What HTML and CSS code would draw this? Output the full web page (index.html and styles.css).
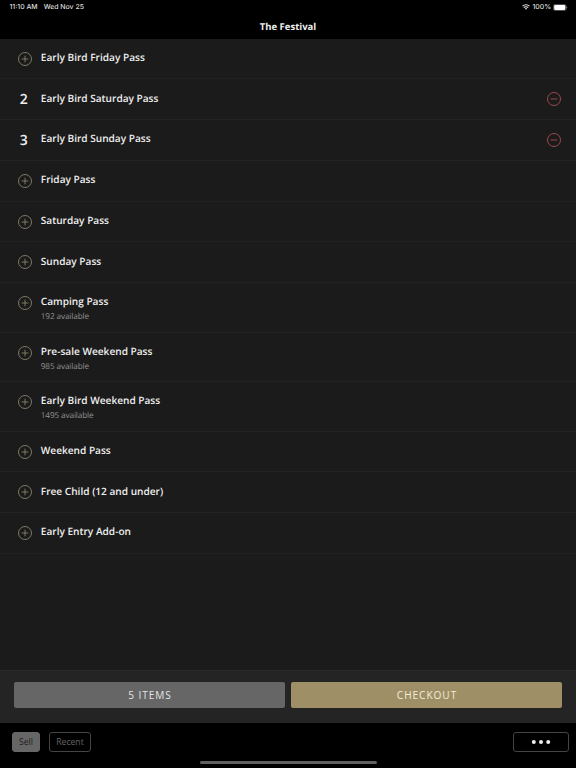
FILE: index.html
```html
<!DOCTYPE html>
<html lang="en">
<head>
<meta charset="utf-8">
<title>The Festival</title>
<link rel="stylesheet" href="styles.css">
</head>
<body>
<svg class="defs" width="0" height="0">
<symbol id="plus" viewBox="0 0 16 16"><circle cx="8" cy="8" r="6.5"/><path d="M8 4.7v6.6M4.7 8h6.6"/></symbol>
<symbol id="minus" viewBox="0 0 16 16"><circle cx="8" cy="8" r="6.5"/><path d="M4.7 8h6.6"/></symbol>
</svg>
<header>
<div class="status">
<span class="time">11:10 AM</span><span class="date">Wed Nov 25</span>
<svg class="wifi" width="8" height="6" viewBox="0 0 8 6"><path d="M.5 2.2a5 5 0 0 1 7 0M1.8 3.6a3.1 3.1 0 0 1 4.4 0"/><path class="dot" d="M2.8 4.5a1.7 1.7 0 0 1 2.4 0L4 5.8z"/></svg>
<span class="percent">100%</span>
<svg class="battery" width="15" height="7" viewBox="0 0 15 7"><rect class="case" x=".4" y=".4" width="12.7" height="6.2" rx="1.7"/><rect x="1.1" y="1.1" width="11.3" height="4.8" rx="1.1"/><path d="M13.7 2.4q1.1 1.1 0 2.2z"/></svg>
</div>
<h1>The Festival</h1>
</header>
<main>
<div class="row"><svg class="icon plus"><use href="#plus"/></svg><div class="name">Early Bird Friday Pass</div></div>
<div class="row"><span class="count">2</span><div class="name">Early Bird Saturday Pass</div><svg class="icon minus"><use href="#minus"/></svg></div>
<div class="row"><span class="count">3</span><div class="name">Early Bird Sunday Pass</div><svg class="icon minus"><use href="#minus"/></svg></div>
<div class="row"><svg class="icon plus"><use href="#plus"/></svg><div class="name">Friday Pass</div></div>
<div class="row"><svg class="icon plus"><use href="#plus"/></svg><div class="name">Saturday Pass</div></div>
<div class="row"><svg class="icon plus"><use href="#plus"/></svg><div class="name">Sunday Pass</div></div>
<div class="row tall"><svg class="icon plus"><use href="#plus"/></svg><div class="name">Camping Pass<small>192 available</small></div></div>
<div class="row tall"><svg class="icon plus"><use href="#plus"/></svg><div class="name">Pre-sale Weekend Pass<small>985 available</small></div></div>
<div class="row tall"><svg class="icon plus"><use href="#plus"/></svg><div class="name">Early Bird Weekend Pass<small>1495 available</small></div></div>
<div class="row"><svg class="icon plus"><use href="#plus"/></svg><div class="name">Weekend Pass</div></div>
<div class="row"><svg class="icon plus"><use href="#plus"/></svg><div class="name">Free Child (12 and under)</div></div>
<div class="row"><svg class="icon plus"><use href="#plus"/></svg><div class="name">Early Entry Add-on</div></div>
</main>
<section class="actions"><button class="items">5 ITEMS</button><button class="checkout">CHECKOUT</button></section>
<footer>
<nav><button class="sell">Sell</button><button class="recent">Recent</button><button class="more" aria-label="More"><svg width="20" height="6" viewBox="0 0 20 6"><circle cx="2.8" cy="3" r="2"/><circle cx="10" cy="3" r="2"/><circle cx="17.2" cy="3" r="2"/></svg></button></nav>
<div class="home"></div>
</footer>
</body>
</html>
```
FILE: styles.css
```css
* { box-sizing: border-box; }
body { margin: 0; width: 576px; height: 768px; display: flex; flex-direction: column; overflow: hidden; background: #1b1b1b; color: #efefef; font-family: "Open Sans", sans-serif; text-rendering: geometricPrecision; }
.defs { position: absolute; }
header { height: 38.5px; background: #000; flex: none; }
.status { height: 14px; display: flex; align-items: center; padding: 0 8.5px 0 9.5px; font: 500 6.9px/14px Inter, sans-serif; color: #dedede; }
.date { margin-left: 6px; }
.wifi { margin-left: auto; fill: none; stroke: #e5e5e5; stroke-width: 1.1; }
.wifi .dot { fill: #e5e5e5; stroke: none; }
.percent { margin: 0 1.5px 0 2.5px; }
.battery { fill: #fff; }
.battery .case { fill: none; stroke: #777; stroke-width: .7; }
h1 { margin: 5px 0 0; font-size: 9.5px; line-height: 15px; font-weight: 700; text-align: center; }
main { flex: 1; }
.row { height: 40.75px; display: flex; align-items: flex-start; padding: 12.1px 14px 0 17px; border-bottom: 1px solid #222; }
.row.tall { height: 49.5px; }
.icon { width: 16px; height: 16px; fill: none; stroke-width: .9; flex: none; }
.plus { stroke: #89816a; }
.minus { stroke: #a84e52; margin-left: auto; }
.count { width: 16px; padding-right: 2.5px; text-align: center; font-size: 14px; line-height: 17px; font-weight: 600; margin-top: -.4px; }
.name { margin-left: 7.8px; font-size: 10.1px; line-height: 14px; font-weight: 600; margin-top: -.7px; }
small { display: block; margin-top: 2px; font-size: 8.2px; letter-spacing: -.12px; line-height: 14px; font-weight: 400; color: #929292; }
button { font-family: inherit; border: 0; border-radius: 2px; padding: 0; display: flex; align-items: center; justify-content: center; }
.actions { height: 53px; flex: none; background: #242424; border-top: 1px solid #2b2b2b; padding: 11.5px 14px 0; display: flex; gap: 6px; }
.actions button { flex: 1; height: 26px; font-size: 10.1px; letter-spacing: .95px; padding-left: 1px; color: #e4e4e4; }
.actions .items { background: #666; }
.actions .checkout { background: #9e8f67; color: #f5ecd8; }
footer { height: 45.5px; flex: none; background: #000; }
nav { display: flex; padding: 9px 7px 0 12px; }
nav button { height: 20.5px; font-size: 8.6px; border: 1px solid #444; border-radius: 3px; background: #000; }
nav .sell { width: 28px; background: #666; border-color: #666; color: #202020; }
nav .recent { width: 42px; margin-left: 9px; color: #666; }
nav .more { width: 56.5px; margin-left: auto; }
.more svg { fill: #eee; }
.home { width: 177px; height: 3px; margin: 8.5px auto 0; border-radius: 2px; background: #606060; }
```
